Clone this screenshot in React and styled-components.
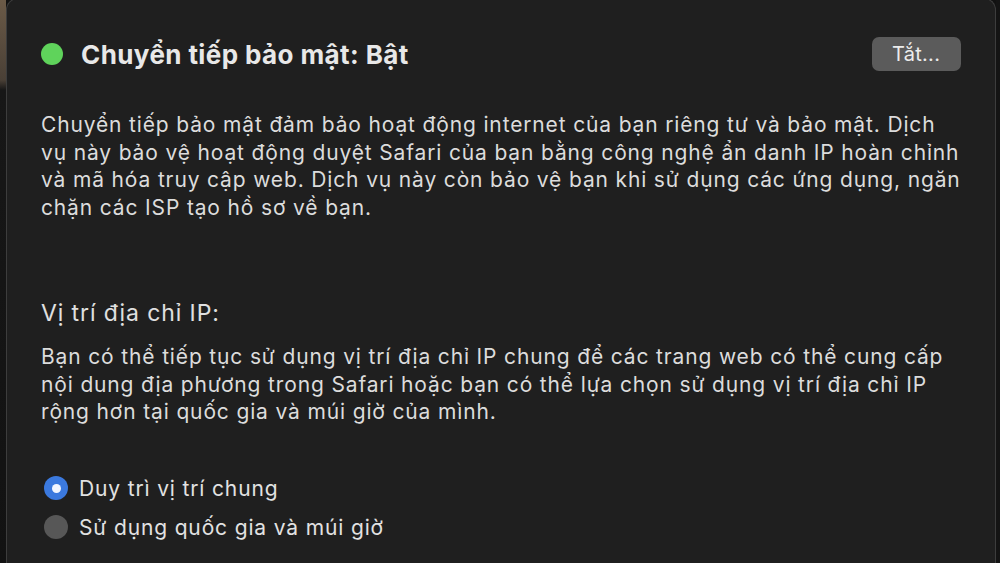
import React from "react";
import styled, { createGlobalStyle } from "styled-components";

const GlobalStyle = createGlobalStyle`
    html, body {
        margin: 0;
        padding: 0;
        background: #121212;
        overflow: hidden;
    }
    body {
        font-family: Inter, "Noto Sans", "Liberation Sans", sans-serif;
        -webkit-font-smoothing: antialiased;
    }
`;

const Desktop = styled.div`
    display: flex;
    width: 1000px;
    height: 563px;
    background: #111;
`;

const Backdrop = styled.div`
    width: ${props => props.width}px;
    flex-shrink: 0;
    background: ${props => props.bg};
`;

const Panel = styled.div`
    flex: 1;
    background: #1f1f1f;
    border: 1px solid #3d3d3d;
    border-bottom: none;
    border-radius: 12px 12px 0 0;
    margin-top: -2px;
    padding: 38px 34px 0 34px;
    color: #e4e4e4;
    display: flex;
    flex-direction: column;
`;

const Header = styled.div`
    display: flex;
    align-items: center;
    justify-content: space-between;
`;

const Status = styled.div`
    display: flex;
    align-items: center;
    gap: 18px;
`;

const Dot = styled.span`
    width: 22px;
    height: 22px;
    border-radius: 50%;
    background: #5fd35b;
    display: inline-block;
`;

const Title = styled.h1`
    margin: 0;
    font-size: 26px;
    font-weight: 700;
    letter-spacing: 0.4px;
    color: #e8e8e8;
`;

const Button = styled.button`
    width: 89px;
    height: 34px;
    border: none;
    border-radius: 7px;
    background: #5b5b5b;
    color: #ececec;
    font-family: inherit;
    font-size: 20px;
    letter-spacing: 0.3px;
    padding: 0;
`;

const Paragraph = styled.p`
    margin: ${props => props.top}px 0 0 0;
    font-size: 21px;
    line-height: 27.5px;
    color: #dcdcdc;
    white-space: nowrap;
    letter-spacing: 0.85px;
`;

const SectionTitle = styled.h2`
    margin: 78px 0 0 0;
    font-size: 23px;
    font-weight: 400;
    letter-spacing: 0.9px;
    color: #e0e0e0;
`;

const RadioGroup = styled.div`
    display: flex;
    flex-direction: column;
    gap: 14px;
    margin-top: 50px;
`;

const RadioRow = styled.label`
    display: flex;
    align-items: center;
    gap: 11px;
    font-size: 21px;
    letter-spacing: 0.85px;
    color: #e2e2e2;
    margin-left: 3px;
`;

const Radio = styled.span`
    width: 24px;
    height: 24px;
    border-radius: 50%;
    box-sizing: border-box;
    background: ${props => (props.checked ? "#3b79de" : "#575757")};
    display: flex;
    align-items: center;
    justify-content: center;
    &::after {
        content: "";
        display: ${props => (props.checked ? "block" : "none")};
        width: 9px;
        height: 9px;
        border-radius: 50%;
        background: #f2f6ff;
    }
`;

const App = () => (
    <>
        <GlobalStyle />
        <Desktop>
            <Backdrop width={6} bg="linear-gradient(#6b5a47 0px, #4a4036 80px, #171717 90px, #121212 100%)" />
            <Panel>
                <Header>
                    <Status>
                        <Dot />
                        <Title>Chuyển tiếp bảo mật: Bật</Title>
                    </Status>
                    <Button>Tắt...</Button>
                </Header>
                <Paragraph top={40}>
                    Chuyển tiếp bảo mật đảm bảo hoạt động internet của bạn riêng tư và bảo mật. Dịch<br />
                    vụ này bảo vệ hoạt động duyệt Safari của bạn bằng công nghệ ẩn danh IP hoàn chỉnh<br />
                    và mã hóa truy cập web. Dịch vụ này còn bảo vệ bạn khi sử dụng các ứng dụng, ngăn<br />
                    chặn các ISP tạo hồ sơ về bạn.
                </Paragraph>
                <SectionTitle>Vị trí địa chỉ IP:</SectionTitle>
                <Paragraph top={16}>
                    Bạn có thể tiếp tục sử dụng vị trí địa chỉ IP chung để các trang web có thể cung cấp<br />
                    nội dung địa phương trong Safari hoặc bạn có thể lựa chọn sử dụng vị trí địa chỉ IP<br />
                    rộng hơn tại quốc gia và múi giờ của mình.
                </Paragraph>
                <RadioGroup>
                    <RadioRow>
                        <Radio checked />
                        Duy trì vị trí chung
                    </RadioRow>
                    <RadioRow>
                        <Radio />
                        Sử dụng quốc gia và múi giờ
                    </RadioRow>
                </RadioGroup>
            </Panel>
            <Backdrop width={5} bg="#141414" />
        </Desktop>
    </>
);

export default App;
